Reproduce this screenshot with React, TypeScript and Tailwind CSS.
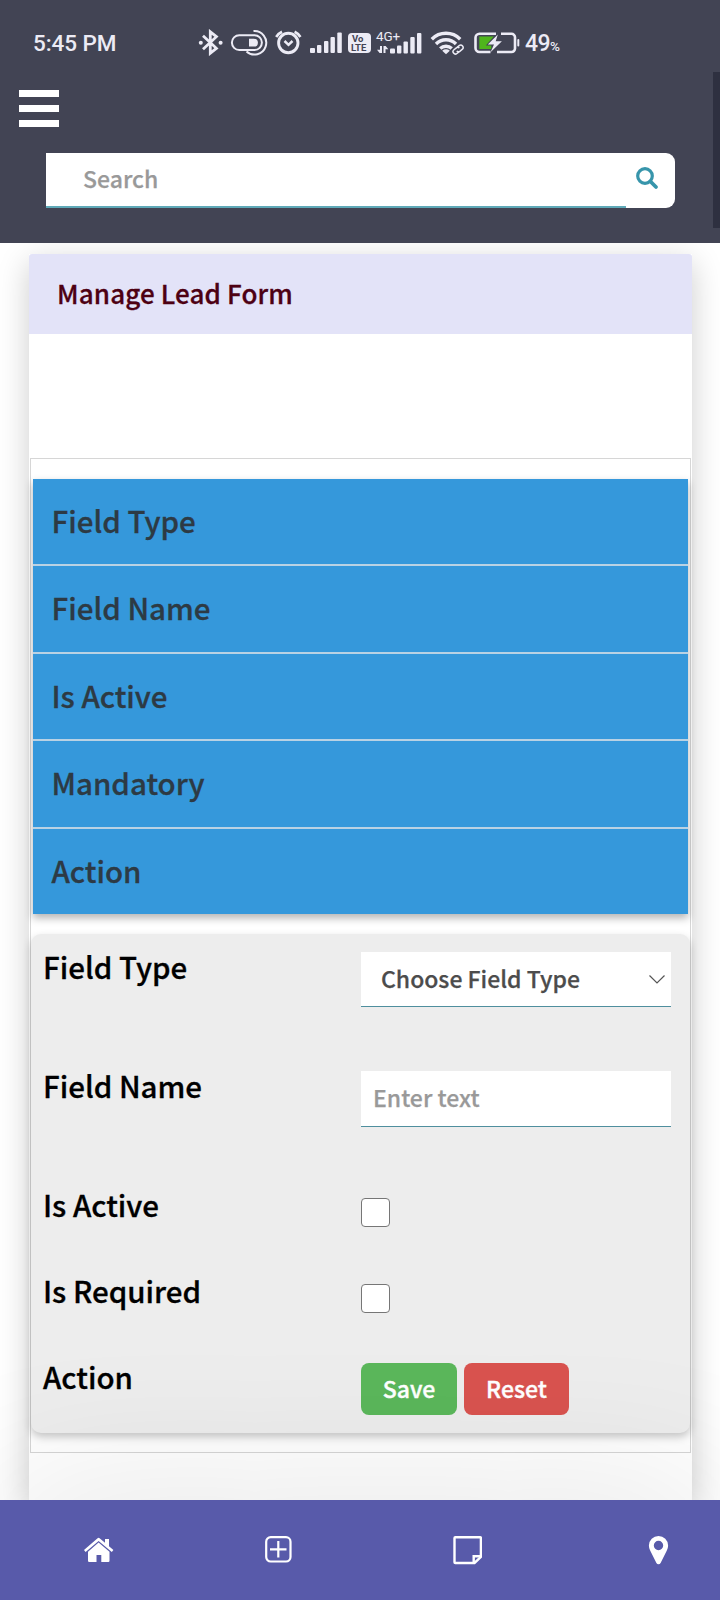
import React, { useState } from 'react';

const columns = ['Field Type', 'Field Name', 'Is Active', 'Mandatory', 'Action'];

function SignalBars({ className }: { className: string }) {
  return (
    <svg className={className} viewBox="0 0 32 21" fill="#ecebf5">
      <rect x="0" y="16" width="5" height="5" rx="1" />
      <rect x="7" y="13" width="4.4" height="8" rx="1" />
      <rect x="14" y="9" width="4.4" height="12" rx="1" />
      <rect x="20.5" y="5" width="4.4" height="16" rx="1" />
      <rect x="27.3" y="0.5" width="4.5" height="20.5" rx="1" />
    </svg>
  );
}

function StatusBar() {
  return (
    <div className="relative h-[86px] font-['Roboto',sans-serif] font-medium text-[#ecebf5]">
      <span className="absolute left-[33px] top-[29px] text-[22.5px] leading-[28px] tracking-[-0.1px]">5:45 PM</span>

      {/* Bluetooth */}
      <svg className="absolute left-[198px] top-[29px] h-[27px] w-[26px]" viewBox="0 0 26 27" fill="none" stroke="#ecebf5" strokeWidth="2.8">
        <path d="M5 6.8 18.4 19.3 12.3 24.2V2.8L18.4 7.7 5 20.2" />
        <circle cx="2.8" cy="13.8" r="2" fill="#ecebf5" stroke="none" />
        <circle cx="22.6" cy="13.8" r="2" fill="#ecebf5" stroke="none" />
      </svg>

      {/* Toggle */}
      <svg className="absolute left-[230px] top-[29px] h-[27px] w-[38px]" viewBox="0 0 38 27" fill="none" stroke="#ecebf5" strokeWidth="2">
        <path d="M24.5 6.2H9.3a7.4 7.4 0 0 0 0 14.8H24.5a7.4 7.4 0 0 0 0-14.8z" />
        <path d="M23.5 2A11.8 11.8 0 1 1 16.5 22.5" />
        <path d="M19 9.8h5a3.9 3.9 0 0 1 0 7.8h-5z" fill="#ecebf5" stroke="none" />
      </svg>

      {/* Alarm */}
      <svg className="absolute left-[274px] top-[29px] h-[27px] w-[28px]" viewBox="0 0 28 27" fill="none" stroke="#ecebf5" strokeWidth="2.9">
        <circle cx="14.3" cy="14" r="9.7" />
        <path d="m10.5 12 4 3.8 4-3.8" strokeWidth="2.5" />
        <path d="M2.2 8A13 13 0 0 1 8 2.8M26.4 8a13 13 0 0 0-5.8-5.2" strokeWidth="2.6" />
      </svg>

      <SignalBars className="absolute left-[310px] top-[32px] h-[21px] w-[32px]" />

      <div className="absolute left-[348px] top-[33px] h-[20px] w-[23px] rounded-[4px] bg-[#ecebf5] text-[#424454]">
        <span className="absolute left-[4px] top-[1px] text-[9.5px] font-bold leading-[9px]">Vo</span>
        <span className="absolute left-[3px] top-[10px] text-[9.5px] font-bold leading-[9px]">LTE</span>
      </div>

      <span className="absolute left-[376px] top-[29px] text-[13.5px] font-normal leading-[14px] tracking-[-0.2px]">4G+</span>
      <svg className="absolute left-[376px] top-[32px] h-[22px] w-[46px]" viewBox="0 0 46 22" fill="#ecebf5">
        <path d="M4 14h2v7H3.6L1 17.8h3zM7.5 21v-7h2.2l2.6 3.2H9.5V21z" />
        <rect x="14" y="16.5" width="5" height="5" rx="1" />
        <rect x="21" y="13.5" width="4.4" height="8" rx="1" />
        <rect x="27.5" y="9.5" width="4.4" height="12" rx="1" />
        <rect x="34.3" y="5" width="4.4" height="16.5" rx="1" />
        <rect x="41" y="1" width="4.4" height="20.5" rx="1" />
      </svg>

      {/* Wifi with link */}
      <svg className="absolute left-[430px] top-[30px] h-[26px] w-[35px]" viewBox="0 0 35 26" fill="none" stroke="#ecebf5" strokeWidth="3.4">
        <path d="M1.8 9.2a20 20 0 0 1 28.4 0" />
        <path d="M6 14a14 14 0 0 1 20 0" />
        <path d="M10.2 18.6a8.4 8.4 0 0 1 11.6 0" />
        <path d="M12.2 20.8a5.6 5.6 0 0 1 7.6 0L16 24.3z" fill="#ecebf5" stroke="none" />
        <g transform="rotate(-38 28 19.5)">
          <rect x="20.5" y="15" width="14" height="9" rx="4" fill="#424454" stroke="none" />
          <g strokeWidth="1.5">
            <path d="M27.3 22h-2.6a2.4 2.4 0 0 1 0-4.8h3a2.4 2.4 0 0 1 2.3 2" />
            <path d="M28.7 17.2h2.6a2.4 2.4 0 0 1 0 4.8h-3a2.4 2.4 0 0 1-2.3-2" />
          </g>
        </g>
      </svg>

      {/* Battery */}
      <svg className="absolute left-[473px] top-[31px] h-[24px] w-[47px]" viewBox="0 0 47 24" fill="none" stroke="#ecebf5" strokeWidth="2.6">
        <path d="M23 2.8H6.5a4 4 0 0 0-4 4V17a4 4 0 0 0 4 4h11" />
        <path d="M28 2.8h10.5a3.5 3.5 0 0 1 3.5 3.5v11.2a3.5 3.5 0 0 1-3.5 3.5h-14.5" />
        <path d="M6.3 5.6h14.5l-8 8.8h5.5v3.6h-12z" fill="#4fb51c" stroke="none" />
        <path d="M24.8 3.5 14.8 13.6h6.2l-3.5 7.6 11.4-11h-6.2z" fill="#ecebf5" stroke="none" />
        <rect x="44.3" y="8" width="2" height="7.5" rx="1" fill="#ecebf5" stroke="none" />
      </svg>

      <span className="absolute left-[525px] top-[30px] text-[23px] leading-[28px] tracking-[-0.6px]">49</span>
      <span className="absolute left-[550px] top-[39px] text-[13.5px] leading-[15px] tracking-[-0.5px]">%</span>
    </div>
  );
}

function Header() {
  return (
    <header className="relative h-[243px] bg-[#424454]">
      <StatusBar />
      <button className="ml-[19px] mt-[4px] flex w-10 flex-col gap-[8.5px]" aria-label="Menu">
        <span className="h-[6.5px] w-full bg-white" />
        <span className="h-[6.5px] w-full bg-white" />
        <span className="h-[6.5px] w-full bg-white" />
      </button>
      <div className="ml-[46px] mt-[26.5px] flex h-[55px] w-[629px] rounded-r-[9px] bg-white">
        <input
          className="h-[55px] w-[580px] border-b-2 border-[#5fa9b8] bg-white pb-[3px] pl-[37px] text-[23px] font-medium text-[#555] outline-none [-webkit-text-stroke:0.25px] placeholder:text-[#999]"
          placeholder="Search"
        />
        <button className="h-full w-[49px] pl-[10px]" aria-label="Search">
          <svg className="mb-[4px] h-[23px] w-[23px]" viewBox="0 0 23 23" fill="none" stroke="#3795ab">
            <circle cx="9" cy="9" r="7.3" strokeWidth="3.2" />
            <path d="m14.5 14.5 5.5 5.5" strokeWidth="3.8" strokeLinecap="round" />
          </svg>
        </button>
      </div>
      <div className="absolute right-0 top-[72px] h-[156px] w-[7px] bg-[#2e3040]" />
    </header>
  );
}

function FormRow({ label, className, children }: { label: string; className: string; children: React.ReactNode }) {
  return (
    <div className={`grid grid-cols-[318px_1fr] items-start ${className}`}>
      <label className="text-[29.5px] font-medium leading-[29px] text-black [-webkit-text-stroke:0.3px]">{label}</label>
      {children}
    </div>
  );
}

function LeadForm() {
  const [name, setName] = useState('');
  return (
    <form className="mt-[20px] h-[499px] rounded-[10px] bg-[#ededed] pl-[12px] pr-[19px] pt-[18px] shadow-[0_4px_8px_rgba(0,0,0,0.22)]">
      <FormRow label="Field Type" className="h-[119px]">
        <div className="flex h-[55px] items-center justify-between border-b-[1.5px] border-[#4f8f9e] bg-white pl-[20px] pr-[6px] text-[23px] font-medium text-[#4c4c4c] [-webkit-text-stroke:0.25px]">
          <span className="-mt-[2px]">Choose Field Type</span>
          <svg className="h-[9px] w-[16px]" viewBox="0 0 16 9" fill="none" stroke="#555" strokeWidth="1.2">
            <path d="m0.5 0.5 7.5 7.5 7.5-7.5" />
          </svg>
        </div>
      </FormRow>
      <FormRow label="Field Name" className="h-[119px]">
        <input
          className="h-[56px] w-full border-b-[1.5px] border-[#4f8f9e] bg-white pb-[4px] pl-[12px] text-[23px] font-medium outline-none [-webkit-text-stroke:0.25px] placeholder:text-[#999]"
          placeholder="Enter text"
          value={name}
          onChange={(e) => setName(e.target.value)}
        />
      </FormRow>
      <FormRow label="Is Active" className="h-[86px]">
        <input type="checkbox" className="mt-[8px] h-[29px] w-[29px] appearance-none rounded-[4px] border-[1.5px] border-[#767676] bg-white" />
      </FormRow>
      <FormRow label="Is Required" className="h-[86px]">
        <input type="checkbox" className="mt-[8px] h-[29px] w-[29px] appearance-none rounded-[4px] border-[1.5px] border-[#767676] bg-white" />
      </FormRow>
      <FormRow label="Action" className="">
        <div className="mt-[1px] flex gap-[7px] text-[23px] font-medium leading-none text-white [-webkit-text-stroke:0.4px]">
          <button type="button" className="h-[52px] w-[96px] rounded-[8px] bg-[#5bb75b] pb-[2px]">Save</button>
          <button type="reset" className="h-[52px] w-[105px] rounded-[8px] bg-[#d9534f] pb-[2px]">Reset</button>
        </div>
      </FormRow>
    </form>
  );
}

function Footer() {
  return (
    <footer className="relative h-[100px] bg-[#585aaa] shadow-[0_0_160px_rgba(0,0,0,0.13)]">
      <nav className="flex pt-[36px] text-white">
        <svg className="ml-[83px] h-[28px] w-[31px]" viewBox="0 0 31 28" fill="#fff">
          <path d="M1 14 14.6 2.2q1-.8 2 0L22 6.8V3h4v7.3l4.4 3.7-1.6 2.1L15.6 5 2.6 16.1z" />
          <path d="M15.6 6.4 26.5 15.8v8.9q0 1.2-1.2 1.2h-7V19h-4.8v6.9H6.2Q5 25.9 5 24.7V15.8z" />
        </svg>
        <svg className="ml-[151px] h-[27px] w-[27px]" viewBox="0 0 27 27" fill="none" stroke="#fff" strokeWidth="2.2">
          <rect x="1.2" y="1.2" width="24.3" height="24.3" rx="4.5" />
          <path d="M13.3 5v16.5M5 13.3h16.5" />
        </svg>
        <svg className="ml-[161px] h-[29px] w-[29px]" viewBox="0 0 29 29" fill="none" stroke="#fff" strokeWidth="2.4">
          <path d="M2.3 1.2h24.8q.8 0 .8.8v19L21.5 27H2.3q-.8 0-.8-.8V2q0-.8.8-.8z" />
          <path d="M27.5 20.3h-6.8V27" />
        </svg>
        <svg className="ml-[166px] h-[29px] w-[21px]" viewBox="0 0 21 29" fill="#fff" fillRule="evenodd">
          <path d="M10.5 0a9.6 9.6 0 0 1 9.6 9.6c0 2.2-.8 3.8-1.5 5.3l-6 12a2.4 2.4 0 0 1-4.2 0l-6-12C1.7 13.4.9 11.8.9 9.6A9.6 9.6 0 0 1 10.5 0zm0 4.8a4.7 4.7 0 1 0 0 9.4 4.7 4.7 0 0 0 0-9.4z" />
        </svg>
      </nav>
    </footer>
  );
}

export default function App() {
  return (
    <div className="flex h-[1600px] w-[720px] flex-col overflow-hidden bg-white font-['Noto_Sans_CJK_SC',sans-serif]">
      <Header />
      <main className="ml-[29px] mt-[11px] h-[1246px] w-[663px] shrink-0 bg-white shadow-[0_8px_30px_rgba(0,0,0,0.2)]">
        <div className="h-[80px] rounded-t-[3px] bg-[#e3e3f8] pl-[28px] text-[26px] font-medium leading-[77px] tracking-[0.13px] text-[#4d0013] [-webkit-text-stroke:0.3px]">
          Manage Lead Form
        </div>
        <div className="ml-[1px] mt-[124px] h-[995px] w-[661px] border border-[#d6d6d6] pt-[20px]">
          <div className="ml-[1.5px] w-[655.5px] bg-[#b9d2e4] shadow-[0_4px_8px_rgba(0,0,0,0.3)]">
            <div className="flex flex-col gap-[2.4px]">
              {columns.map((col) => (
                <div key={col} className="h-[85.1px] bg-[#3598db] pl-[19px] text-[29.5px] font-medium leading-[83px] text-[#2d3a44] [-webkit-text-stroke:0.3px]">
                  {col}
                </div>
              ))}
            </div>
          </div>
          <LeadForm />
        </div>
      </main>
      <Footer />
    </div>
  );
}
